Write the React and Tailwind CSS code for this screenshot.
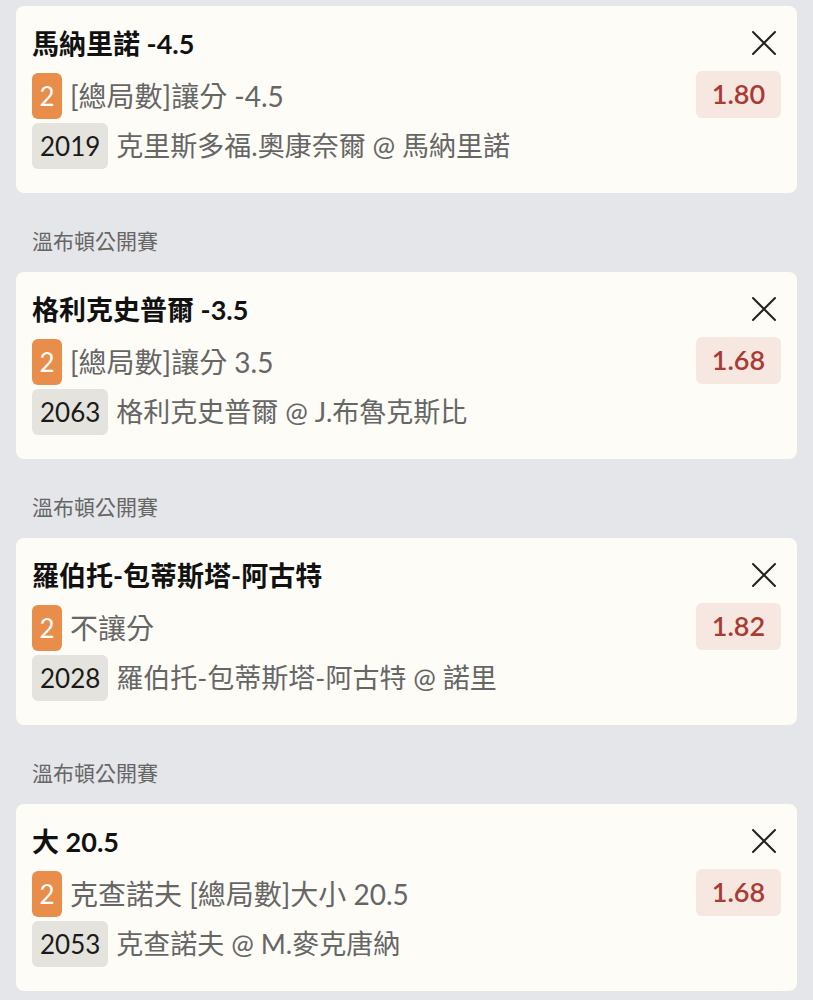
import React from "react";

const bets = [
  {
    league: null,
    title: "馬納里諾 -4.5",
    pick: "[總局數]讓分 -4.5",
    code: "2019",
    match: "克里斯多福.奧康奈爾 @ 馬納里諾",
    odds: "1.80",
  },
  {
    league: "溫布頓公開賽",
    title: "格利克史普爾 -3.5",
    pick: "[總局數]讓分 3.5",
    code: "2063",
    match: "格利克史普爾 @ J.布魯克斯比",
    odds: "1.68",
  },
  {
    league: "溫布頓公開賽",
    title: "羅伯托-包蒂斯塔-阿古特",
    pick: "不讓分",
    code: "2028",
    match: "羅伯托-包蒂斯塔-阿古特 @ 諾里",
    odds: "1.82",
  },
  {
    league: "溫布頓公開賽",
    title: "大 20.5",
    pick: "克查諾夫 [總局數]大小 20.5",
    code: "2053",
    match: "克查諾夫 @ M.麥克唐納",
    odds: "1.68",
  },
];

function CloseIcon() {
  return (
    <svg width="26" height="26" viewBox="0 0 26 26" fill="none">
      <path d="M2 2L24 24M24 2L2 24" stroke="#222" strokeWidth="2" strokeLinecap="round" />
    </svg>
  );
}

function BetCard({ bet }) {
  return (
    <div className="flex justify-between rounded-lg bg-[#fdfcf6] pl-4 pr-4 pt-[22px] pb-6">
      <div className="flex flex-col">
        <div className="text-[27px] font-bold leading-[32px] text-[#111]">{bet.title}</div>
        <div className="mt-[13px] flex items-center gap-2">
          <span className="flex h-[46px] w-[30px] items-center justify-center rounded-md bg-[#e98d4a] text-[26px] text-white">
            2
          </span>
          <span className="text-[28px] text-[#666]">{bet.pick}</span>
        </div>
        <div className="mt-1 flex items-center gap-2">
          <span className="flex h-[46px] items-center rounded-md bg-[#e4e3dd] px-2 text-[26px] text-[#1a1a1a]">
            {bet.code}
          </span>
          <span className="text-[27px] text-[#666]">{bet.match}</span>
        </div>
      </div>
      <div className="flex flex-col items-end">
        <div className="mr-[4px] mt-[2px]">
          <CloseIcon />
        </div>
        <div className="mt-[15px] flex h-[47px] w-[85px] items-center justify-center rounded-md bg-[#f6e7e1] text-[27px] font-semibold text-[#a83b33]">
          {bet.odds}
        </div>
      </div>
    </div>
  );
}

export default function App() {
  return (
    <div
      className="min-h-screen bg-[#e5e6ea] px-4 pt-[6px]"
      style={{ fontFamily: 'Lato, "Noto Sans CJK TC", sans-serif' }}
    >
      {bets.map((bet, i) => (
        <div key={i}>
          {bet.league && (
            <div className="pl-4 pt-[34px] pb-[17px] text-[21px] leading-[28px] text-[#666]">{bet.league}</div>
          )}
          <BetCard bet={bet} />
        </div>
      ))}
    </div>
  );
}
